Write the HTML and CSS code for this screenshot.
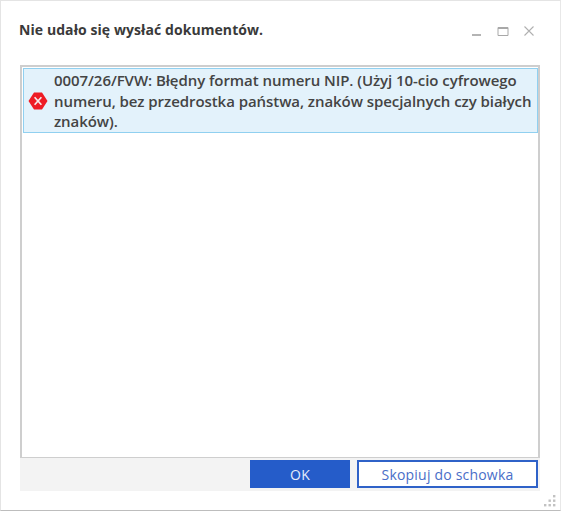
FILE: index.html
```html
<!DOCTYPE html>
<html lang="pl">
<head>
<meta charset="utf-8">
<title>Błąd</title>
<link rel="stylesheet" href="styles.css">
</head>
<body>
<div class="window">
  <header class="titlebar">
    <h1 class="title">Nie udało się wysłać dokumentów.</h1>
    <div class="controls">
      <svg class="ctl" viewBox="0 0 12 12"><rect x="1" y="9" width="9" height="2" fill="#b4b4b4"/></svg>
      <svg class="ctl" viewBox="0 0 12 12"><path d="M1 2.5h10v8H1z" fill="none" stroke="#a8a8a8" stroke-width="1"/><rect x="1" y="2" width="10" height="2" fill="#a8a8a8"/></svg>
      <svg class="ctl" viewBox="0 0 12 12"><path d="M1.5 1.5l9 9M10.5 1.5l-9 9" fill="none" stroke="#b0b0b0" stroke-width="1.1"/></svg>
    </div>
  </header>
  <main class="content">
    <div class="list">
      <div class="item">
        <svg class="erricon" viewBox="0 0 20 20"><path d="M6 1.5h8l5.5 8.5-5.5 8.5H6L.5 10z" fill="#ee1c25"/><path d="M6.6 6.2l6.8 7.6M13.4 6.2l-6.8 7.6" stroke="#f6eaea" stroke-width="1.7" fill="none"/></svg>
        <p class="msg">0007/26/FVW: Błędny format numeru NIP. (Użyj 10-cio cyfrowego numeru, bez przedrostka państwa, znaków specjalnych czy białych znaków).</p>
      </div>
    </div>
    <div class="footer">
      <button class="btn primary">OK</button>
      <button class="btn secondary">Skopiuj do schowka</button>
    </div>
  </main>
  <svg class="grip" viewBox="0 0 14 14"><g fill="#c2c2c2"><rect x="10" y="1" width="2.4" height="2.4"/><rect x="5.5" y="5.5" width="2.4" height="2.4"/><rect x="10" y="5.5" width="2.4" height="2.4"/><rect x="1" y="10" width="2.4" height="2.4"/><rect x="5.5" y="10" width="2.4" height="2.4"/><rect x="10" y="10" width="2.4" height="2.4"/></g></svg>
</div>
</body>
</html>
```

FILE: styles.css
```css
* { box-sizing: border-box; }
html, body { margin: 0; padding: 0; background: #fff; }
body { width: 561px; height: 512px; overflow: hidden; font-family: "Open Sans", "Noto Sans", sans-serif; color: #3c3c3c; }
.window { position: relative; width: 561px; height: 511px; border: 1px solid #d6d6d6; border-left-color: #e4e4e4; border-top-color: #e4e4e4; border-right-color: #e8e8e8; border-bottom-color: #bdbdbd; background: #fff; }
.titlebar { display: flex; align-items: center; justify-content: space-between; height: 64px; padding: 0 25px 7px 18px; }
.title { margin: 0; font-size: 14px; font-weight: 700; color: #3a3a3a; letter-spacing: 0.08px; }
.controls { display: flex; gap: 14px; margin-top: 3px; }
.ctl { width: 12px; height: 12px; display: block; }
.content { padding: 0 20px 0 19px; }
.list { height: 393px; border: 2px solid #cecece; border-bottom-width: 1px; background: #fff; padding: 1px 0 0 1px; }
.item { display: flex; align-items: center; gap: 6px; width: 515px; height: 65px; padding: 1px 2px 0 4px; background: #e3f2fb; border: 1px solid #90d0f0; }
.erricon { width: 20px; height: 20px; flex: none; }
.msg { margin: 0; font-size: 15px; font-weight: 600; line-height: 20.5px; color: #444; letter-spacing: -0.06px; }
.footer { display: flex; justify-content: flex-end; gap: 6px; height: 33px; background: #f3f3f3; padding: 2px 2px 0 0; }
.btn { height: 28px; font-family: inherit; font-size: 14px; letter-spacing: 0.2px; margin: 0; padding: 0; cursor: pointer; }
.primary { width: 100px; background: #255cc9; color: #e6ecfa; border: 0; margin-right: 1px; }
.secondary { width: 181px; background: #fff; color: #4a6ec8; border: 2px solid #2f62c8; }
.grip { position: absolute; right: 3px; bottom: 2px; width: 14px; height: 14px; }
```
